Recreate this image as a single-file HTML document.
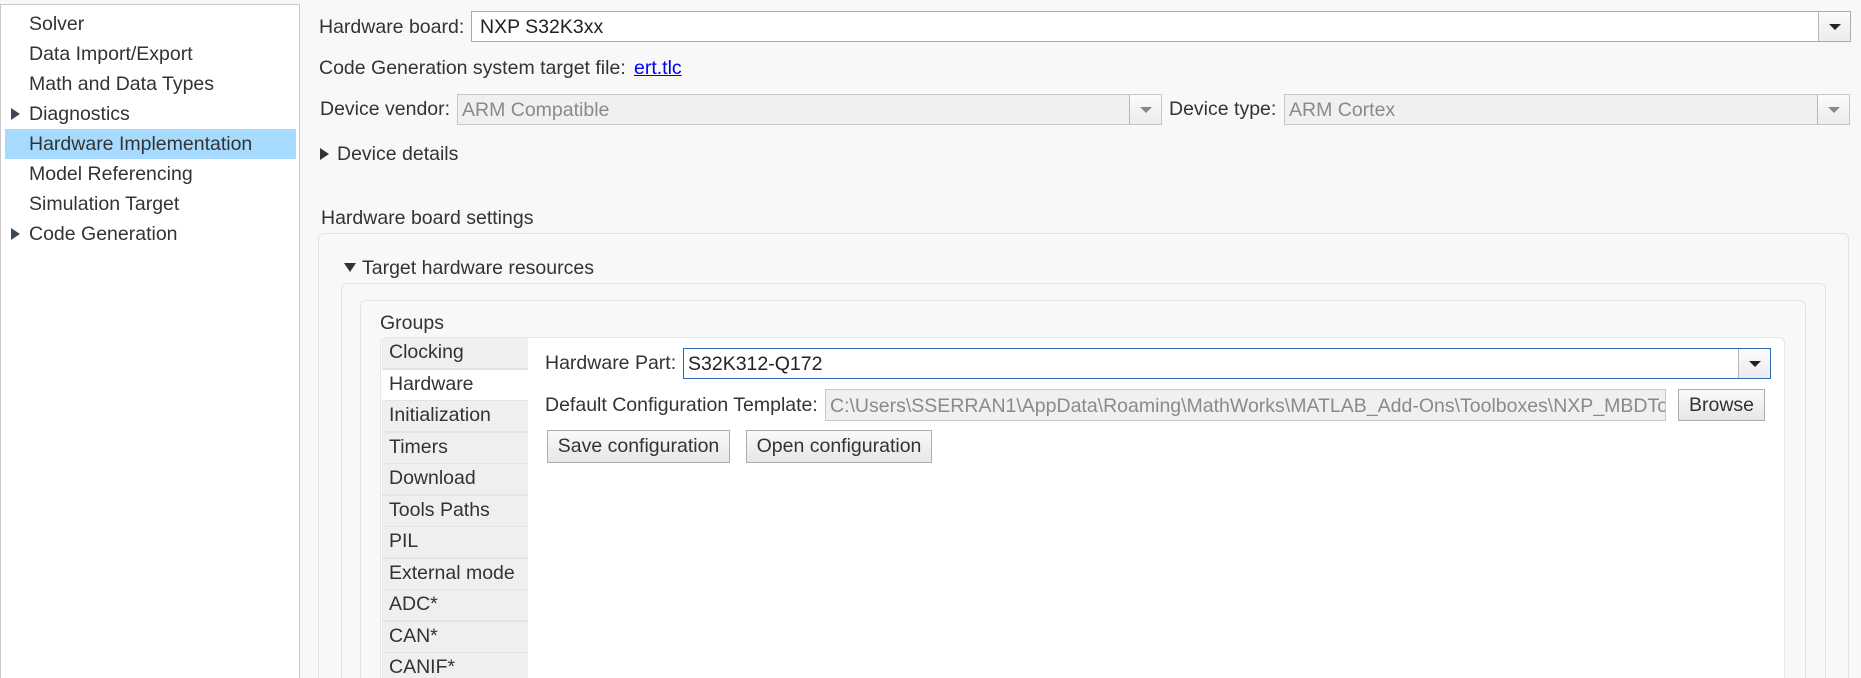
<!DOCTYPE html>
<html><head><meta charset="utf-8"><style>
*{box-sizing:border-box;margin:0;padding:0}
html,body{width:1861px;height:678px;overflow:hidden}
body{background:#f8f8f8;font-family:"Liberation Sans",Arial,sans-serif;font-size:19.5px;color:#333}
#w{position:relative;width:1861px;height:678px;overflow:hidden}
.a{position:absolute;white-space:nowrap}
.t{line-height:22px;margin-top:-11px}
.side{position:absolute;left:0;top:4px;width:300px;height:674px;background:#fff;border:1px solid #c8c8c8;border-bottom:none}
.hl{position:absolute;left:5px;top:129px;width:291px;height:30px;background:#a6dbff}
.tri{position:absolute;width:0;height:0;border-top:6px solid transparent;border-bottom:6px solid transparent;border-left:9px solid #3c4858}
.trid{position:absolute;width:0;height:0;border-left:6px solid transparent;border-right:6px solid transparent;border-top:9px solid #333}
.box{position:absolute;background:#fff;border:1px solid #ababab}
.box.dis{background:#f0f0f0;border-color:#c8c8c8;color:#8a8a8a}
.dd{position:absolute;top:0;right:0;bottom:0;width:32px;border-left:1px solid #b8b8b8;background:linear-gradient(#fbfbfb,#ececec)}
.dd:after{content:"";position:absolute;left:10px;top:12px;border-left:6px solid transparent;border-right:6px solid transparent;border-top:6px solid #222}
.dis .dd:after{border-top-color:#888}
.pan{position:absolute;border:1.5px solid #e3e3e3;border-bottom:none;border-radius:6px 6px 0 0;background:#f8f8f8}
.tab{position:absolute;left:382px;width:146px;height:29.5px;background:#efefef;padding-left:7px;line-height:29px;overflow:hidden}
.btn{position:absolute;border:1px solid #adadad;background:linear-gradient(#fafafa,#e6e6e6);text-align:center;line-height:30px}
</style></head><body><div id="w">
<div class="side"></div>
<div class="hl"></div>
<div class="a t" style="left:29px;top:24px">Solver</div>
<div class="a t" style="left:29px;top:54px">Data Import/Export</div>
<div class="a t" style="left:29px;top:84px">Math and Data Types</div>
<div class="tri" style="left:11px;top:108px"></div>
<div class="a t" style="left:29px;top:114px">Diagnostics</div>
<div class="a t" style="left:29px;top:144px">Hardware Implementation</div>
<div class="a t" style="left:29px;top:174px">Model Referencing</div>
<div class="a t" style="left:29px;top:204px">Simulation Target</div>
<div class="tri" style="left:11px;top:228px"></div>
<div class="a t" style="left:29px;top:234px">Code Generation</div>

<div class="a t" style="left:319px;top:27px">Hardware board:</div>
<div class="box" style="left:471px;top:11px;width:1380px;height:31px"><div class="a t" style="left:8px;top:15px;color:#222">NXP S32K3xx</div><div class="dd"></div></div>
<div class="a t" style="left:319px;top:68px">Code Generation system target file:</div>
<div class="a t" style="left:634px;top:68px;color:#0000ee;text-decoration:underline">ert.tlc</div>

<div class="a t" style="left:320px;top:109px">Device vendor:</div>
<div class="box dis" style="left:457px;top:94px;width:705px;height:31px"><div class="a t" style="left:4px;top:15px;color:#8a8a8a">ARM Compatible</div><div class="dd"></div></div>
<div class="a t" style="left:1169px;top:109px">Device type:</div>
<div class="box dis" style="left:1284px;top:94px;width:566px;height:31px"><div class="a t" style="left:4px;top:15px;color:#8a8a8a">ARM Cortex</div><div class="dd"></div></div>

<div class="tri" style="left:320px;top:148px;border-left-color:#333"></div>
<div class="a t" style="left:337px;top:154px">Device details</div>
<div class="a t" style="left:321px;top:218px">Hardware board settings</div>

<div class="pan" style="left:318px;top:233px;width:1531px;height:445px"></div>
<div class="trid" style="left:344px;top:263px"></div>
<div class="a t" style="left:362px;top:268px">Target hardware resources</div>
<div class="pan" style="left:341px;top:283px;width:1485px;height:395px"></div>
<div class="pan" style="left:360px;top:300px;width:1446px;height:378px"></div>
<div class="a t" style="left:380px;top:323px">Groups</div>
<div class="pan" style="left:380px;top:337px;width:1405px;height:341px;background:#fff;border-color:#e6e6e6"></div>
<div class="a" style="left:382px;top:338px;width:146px;height:340px;background:#e4e4e4"></div>

<div class="tab" style="top:338px">Clocking</div>
<div class="tab" style="top:370px;background:#fff">Hardware</div>
<div class="tab" style="top:401px">Initialization</div>
<div class="tab" style="top:433px">Timers</div>
<div class="tab" style="top:464px">Download</div>
<div class="tab" style="top:496px">Tools Paths</div>
<div class="tab" style="top:527px">PIL</div>
<div class="tab" style="top:559px">External mode</div>
<div class="tab" style="top:590px">ADC*</div>
<div class="tab" style="top:622px">CAN*</div>
<div class="tab" style="top:653px;height:25px">CANIF*</div>

<div class="a t" style="left:545px;top:363px">Hardware Part:</div>
<div class="box" style="left:683px;top:348px;width:1088px;height:31px;border-color:#2f6bb3"><div class="a t" style="left:4px;top:15px;color:#222">S32K312-Q172</div><div class="dd"></div></div>
<div class="a t" style="left:545px;top:405px">Default Configuration Template:</div>
<div class="box dis" style="left:825px;top:389px;width:841px;height:32px;overflow:hidden"><div class="a t" style="left:4px;top:16px;color:#8a8a8a">C:\Users\SSERRAN1\AppData\Roaming\MathWorks\MATLAB_Add-Ons\Toolboxes\NXP_MBDToolbox</div></div>
<div class="btn" style="left:1678px;top:389px;width:87px;height:32px">Browse</div>
<div class="btn" style="left:547px;top:430px;width:183px;height:33px">Save configuration</div>
<div class="btn" style="left:746px;top:430px;width:186px;height:33px">Open configuration</div>
</div></body></html>
